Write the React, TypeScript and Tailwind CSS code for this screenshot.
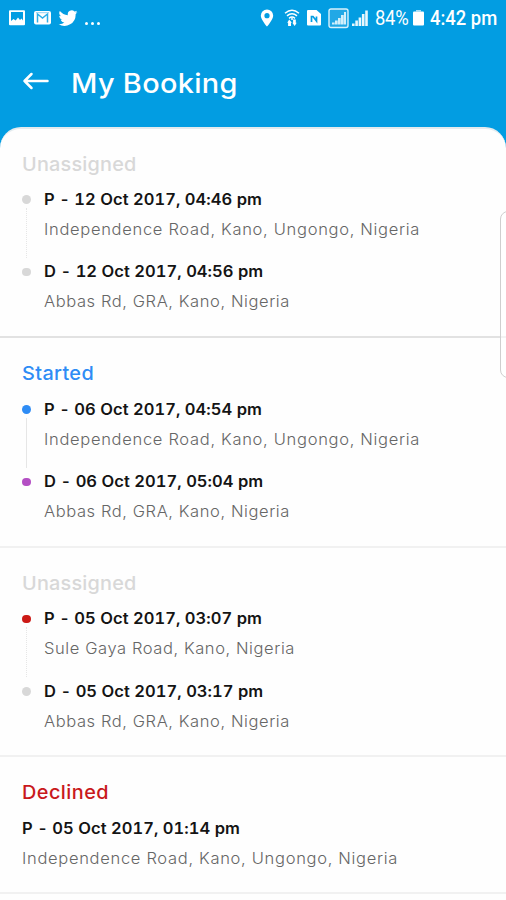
import React from 'react';
import clsx from 'clsx';

interface Stop {
  time: string;
  address: string;
  dot?: string;
}

interface Booking {
  id: number;
  status: string;
  statusClass: string;
  line?: string;
  stops: Stop[];
}

const BOOKINGS: Booking[] = [
  {
    id: 1,
    status: 'Unassigned',
    statusClass: 'text-[#d8d8d8] tracking-[0.2px]',
    line: 'border-dotted',
    stops: [
      { time: 'P - 12 Oct 2017, 04:46 pm', address: 'Independence Road, Kano, Ungongo, Nigeria', dot: 'bg-[#d8d8d8]' },
      { time: 'D - 12 Oct 2017, 04:56 pm', address: 'Abbas Rd, GRA, Kano, Nigeria', dot: 'bg-[#d8d8d8]' },
    ],
  },
  {
    id: 2,
    status: 'Started',
    statusClass: 'text-[#2e8cf5] tracking-[0.35px]',
    line: 'border-solid',
    stops: [
      { time: 'P - 06 Oct 2017, 04:54 pm', address: 'Independence Road, Kano, Ungongo, Nigeria', dot: 'bg-[#2e8cf5]' },
      { time: 'D - 06 Oct 2017, 05:04 pm', address: 'Abbas Rd, GRA, Kano, Nigeria', dot: 'bg-[#b44fc4]' },
    ],
  },
  {
    id: 3,
    status: 'Unassigned',
    statusClass: 'text-[#d8d8d8] tracking-[0.2px]',
    line: 'border-dotted',
    stops: [
      { time: 'P - 05 Oct 2017, 03:07 pm', address: 'Sule Gaya Road, Kano, Nigeria', dot: 'bg-[#cc1a16]' },
      { time: 'D - 05 Oct 2017, 03:17 pm', address: 'Abbas Rd, GRA, Kano, Nigeria', dot: 'bg-[#d8d8d8]' },
    ],
  },
  {
    id: 4,
    status: 'Declined',
    statusClass: 'text-[#c9191c] tracking-[0.45px]',
    stops: [{ time: 'P - 05 Oct 2017, 01:14 pm', address: 'Independence Road, Kano, Ungongo, Nigeria' }],
  },
];

const StatusBar: React.FC = () => (
  <div className="flex h-9 items-center justify-between pl-2 pr-[9px] text-white">
    <div className="flex items-center">
      {/* Gallery */}
      <svg width="18" height="18" viewBox="0 0 18 18">
        <rect x="1" y="1.2" width="16" height="15" rx="1" fill="currentColor" />
        <path d="M3 3h12v8.500l-1.500-2-1.500 1.500-2-2.500-2.300 3L5.500 10 3 12z" fill="#029de2" />
      </svg>
      {/* Mail */}
      <svg className="ml-[7px]" width="20" height="18" viewBox="0 0 20 18">
        <rect x="1" y="2" width="17" height="13.5" rx="2" fill="currentColor" />
        <path d="M4.500 13.500V5l5 4 5-4v8.500" fill="none" stroke="#2caee8" strokeWidth="1.500" />
        <path d="M3 3.700h13" stroke="#8fd2f2" />
      </svg>
      {/* Twitter */}
      <svg className="ml-[5px]" width="20" height="18" viewBox="0 0 24 22" fill="currentColor">
        <path d="M23.6 3.8c-.8.4-1.7.6-2.7.8 1-.6 1.7-1.5 2-2.6-.9.5-1.9.9-3 1.1A4.8 4.8 0 0 0 11.8 7.5C7.900 7.300 4.400 5.400 2 2.500c-1.300 2.200-.7 5 1.500 6.400-.8 0-1.500-.2-2.200-.6 0 2.300 1.600 4.300 3.900 4.800-.7.2-1.400.2-2.100.1.6 1.900 2.400 3.300 4.500 3.300A9.700 9.700 0 0 1 .5 18.500 13.600 13.600 0 0 0 21.300 6.300c.9-.7 1.700-1.500 2.300-2.500z" />
      </svg>
      <div className="ml-[7px] mt-2.5 flex gap-[3px]">
        <span className="size-[3px] rounded-full bg-white" />
        <span className="size-[3px] rounded-full bg-white" />
        <span className="size-[3px] rounded-full bg-white" />
      </div>
    </div>

    <div className="flex items-center font-['Roboto',sans-serif] text-[20px] leading-none">
      {/* Location */}
      <svg width="14" height="18" viewBox="0 0 14 18">
        <path fillRule="evenodd" d="M7 .5a6.200 6.200 0 0 0-6.200 6.200C.8 10.500 7 17.500 7 17.500s6.200-7 6.200-10.800A6.200 6.200 0 0 0 7 .5zm0 3.600a2.600 2.600 0 1 1 0 5.200 2.600 2.600 0 0 1 0-5.200z" fill="currentColor" />
      </svg>
      {/* Wi-Fi with transfer arrows */}
      <svg className="ml-[10px]" width="16" height="18" viewBox="0 0 16 18" fill="none" stroke="currentColor" strokeWidth="1.500">
        <path d="M1 4.300q7-6 14 0M3 6.800q5-4 10 0M5 9.300q3-2.400 6 0" />
        <path d="M8 8.500v2.500" />
        <path d="M5.200 10.500 3.200 13.700h.9V17H7v-3.300h.9zM10.700 17l2-3.200h-.9v-3.300H9.100v3.300h-.8z" fill="currentColor" stroke="none" />
      </svg>
      {/* NFC */}
      <svg className="ml-[6px]" width="16" height="18" viewBox="0 0 16 18">
        <path d="M2 1h8.500L15 5v10.500a1 1 0 0 1-1 1H2a1 1 0 0 1-1-1V2a1 1 0 0 1 1-1z" fill="currentColor" />
        <path d="M5.500 13V7.500h1.500L10.500 12V7.500" fill="none" stroke="#029de2" strokeWidth="1.700" />
      </svg>
      {/* SIM signals */}
      <svg className="ml-[6px]" width="41" height="21" viewBox="0 0 41 21">
        <rect x="1" y="1" width="19" height="18.500" rx="2" fill="#22a8e6" stroke="#d8f1fc" strokeWidth="1.400" />
        <path d="M4 16.500v-2h2.700v2zM7 16.500v-4h2.700v4zM10 16.500V10h2.700v6.500zM13 16.500V7h2.700v9.500zM16 16.500V4h2v12.500z" fill="#d2effb" />
        <path d="M24 18v-2.500h2.600V18zM27.300 18v-5.500h2.600V18zM30.600 18V9.500h2.600V18zM33.900 18V6h2.600v12zM37.200 18V2.500h2.600V18z" fill="#e8f7fd" />
      </svg>
      <span className="ml-[6px] w-[35px] origin-left scale-x-[0.92] tracking-[-0.3px]">84%</span>
      {/* Battery */}
      <svg className="ml-[2px]" width="13" height="18" viewBox="0 0 13 18">
        <path d="M4 1h5v1.500H4z" fill="#a6dcf5" />
        <rect x="1" y="2.500" width="11" height="14" rx="1" fill="currentColor" />
      </svg>
      <span className="ml-[5px] w-[67px] origin-left scale-x-[0.92] whitespace-nowrap font-medium">4:42 pm</span>
    </div>
  </div>
);

const StopRow: React.FC<{ stop: Stop; line?: string; last: boolean }> = ({ stop, line, last }) => (
  <div className="flex">
    {stop.dot && (
      <div className="flex w-[22px] shrink-0 flex-col">
        <span className={clsx('mt-[7.5px] size-[8.5px] shrink-0 rounded-full', stop.dot)} />
        {!last && <span className={clsx('ml-[3.5px] mt-1 h-[50px] w-0 border-l border-[#e6e6e6]', line)} />}
      </div>
    )}
    <div className={clsx('origin-left scale-x-[1.065] whitespace-nowrap', !last && 'pb-[18.5px]')}>
      <p className="text-[15.5px] font-semibold leading-6 tracking-[0.04px] text-[#141414] tabular-nums">{stop.time}</p>
      <p
        className={clsx(
          'mt-1.5 text-[15.5px] font-light leading-6 text-[#666]',
          stop.address.length > 30 ? 'tracking-[0.65px]' : 'tracking-[0.55px]'
        )}
      >
        {stop.address}
      </p>
    </div>
  </div>
);

const App: React.FC = () => {
  return (
    <div className="relative h-[900px] w-[506px] overflow-hidden bg-[#029de2] font-['Inter',sans-serif]">
      <StatusBar />

      {/* Header */}
      <header className="flex h-[91px] items-center pl-[22px] text-white">
        <svg className="mb-0.5" width="28" height="20" viewBox="0 0 28 20" fill="none" stroke="currentColor" strokeWidth="2.500" strokeLinecap="round" strokeLinejoin="round">
          <path d="M9.500 3 2.500 10l7 7M2.500 10H25.500" />
        </svg>
        <h1 className="ml-[21px] mt-[5px] origin-left scale-x-[1.07] text-[27px] font-medium leading-8 tracking-[0.3px]">My Booking</h1>
      </header>

      {/* Booking list */}
      <main className="h-[773px] rounded-t-[21px] border-t-2 border-[#e4ebee] bg-[#fefefe]">
        {BOOKINGS.map((booking, index) => (
          <section
            key={booking.id}
            className={clsx(
              'border-b-2 px-[22px] pt-6',
              index === 0 ? 'border-[#e2e2e2] pb-[22px]' : 'border-[#f1f1f1]',
              index > 0 && (booking.stops.length > 1 ? 'pb-[21.5px]' : 'pb-[21px]')
            )}
          >
            <h2
              className={clsx(
                'w-fit origin-left scale-x-[1.045] text-[19px] font-medium leading-6',
                index === 0 ? 'mb-[10.5px]' : 'mb-[11.5px]',
                booking.statusClass
              )}
            >
              {booking.status}
            </h2>
            {booking.stops.map((stop, i) => (
              <StopRow key={stop.time} stop={stop} line={booking.line} last={i === booking.stops.length - 1} />
            ))}
          </section>
        ))}
      </main>

      {/* Edge panel handle */}
      <div className="absolute right-[-10px] top-[211px] h-[167px] w-4 rounded-lg border border-[#cfcfcf] bg-white/60" />
    </div>
  );
};

export default App;
